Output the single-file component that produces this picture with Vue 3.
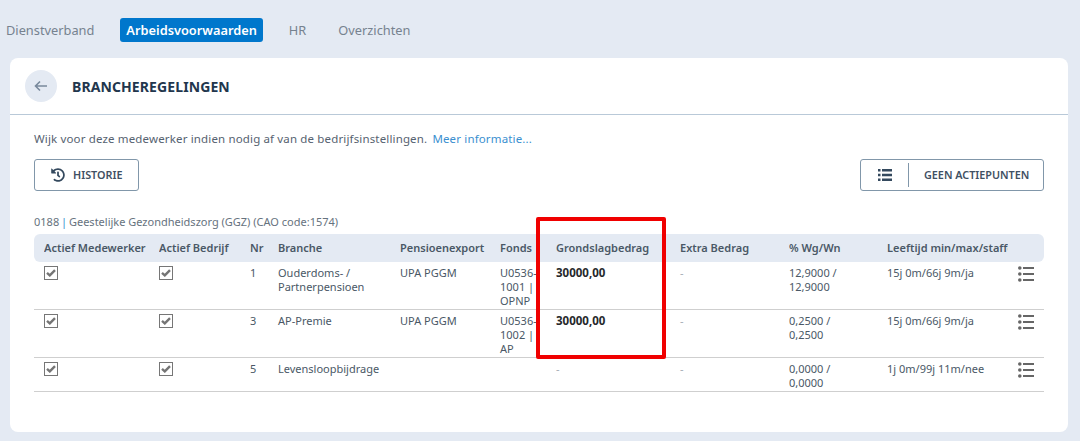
<template>
  <div class="page">
    <nav class="tabs">
      <a v-for="tab in tabs" :key="tab" class="tab" :class="{ active: tab === activeTab }">{{ tab }}</a>
    </nav>

    <section class="card">
      <header class="card-head">
        <button class="back" aria-label="Terug">
          <svg width="14" height="12" viewBox="0 0 14 12"><path d="M13 6H2M6 1.500 1.500 6 6 10.500" fill="none" stroke="#78899c" stroke-width="1.600" /></svg>
        </button>
        <h1>BRANCHEREGELINGEN</h1>
      </header>

      <div class="card-body">
        <p class="intro">
          Wijk voor deze medewerker indien nodig af van de bedrijfsinstellingen.
          <a class="more">Meer informatie...</a>
        </p>

        <div class="actions">
          <button class="btn history">
            <svg width="14" height="14" viewBox="0 0 512 512"><path fill="#34495e" d="M504 255.531c.253 136.64-111.18 248.372-247.82 248.468-59.015.042-113.223-20.53-155.822-54.911-11.077-8.94-11.905-25.541-1.839-35.607l11.267-11.267c8.609-8.609 22.353-9.551 31.891-1.984C173.062 425.135 212.781 440 256 440c101.705 0 184-82.311 184-184 0-101.705-82.311-184-184-184-48.814 0-93.149 18.969-126.068 49.932l50.754 50.754c10.08 10.08 2.941 27.314-11.313 27.314H24c-8.837 0-16-7.163-16-16V38.627c0-14.254 17.234-21.393 27.314-11.314l49.372 49.372C129.209 34.136 189.552 8 256 8c136.81 0 247.747 110.78 248 247.531zm-180.912 78.784l9.823-12.63c8.138-10.463 6.253-25.542-4.21-33.679L288 256.349V152c0-13.255-10.745-24-24-24h-16c-13.255 0-24 10.745-24 24v135.651l65.409 50.874c10.463 8.137 25.541 6.253 33.679-4.21z" /></svg>
            <span>HISTORIE</span>
          </button>
          <button class="btn points">
            <span class="points-icon">
              <svg width="14" height="12" viewBox="0 0 14 12"><path fill="#34495e" d="M0 0h2.500v2.500H0zM4 0h10v2.500H4zM0 4.700h2.500v2.500H0zM4 4.700h10v2.500H4zM0 9.400h2.500v2.500H0zM4 9.400h10v2.500H4z" /></svg>
            </span>
            <span>GEEN ACTIEPUNTEN</span>
          </button>
        </div>

        <p class="caption">0188 <span class="sep">|</span> Geestelijke Gezondheidszorg (GGZ) (CAO code:1574)</p>

        <div class="table-wrap">
          <table>
            <colgroup>
              <col v-for="w in colWidths" :key="w.id" :style="{ width: w.px + 'px' }" />
            </colgroup>
            <thead>
              <tr>
                <th v-for="c in columns" :key="c"><div class="clip">{{ c }}</div></th>
                <th></th>
              </tr>
            </thead>
            <tbody>
              <tr v-for="row in rows" :key="row.nr">
                <td><span class="check"><svg width="10" height="8" viewBox="0 0 10 8"><path d="M1 3.800l2.800 2.600L9 1.200" fill="none" stroke="#757575" stroke-width="2.400" /></svg></span></td>
                <td><span class="check"><svg width="10" height="8" viewBox="0 0 10 8"><path d="M1 3.800l2.800 2.600L9 1.200" fill="none" stroke="#757575" stroke-width="2.400" /></svg></span></td>
                <td>{{ row.nr }}</td>
                <td>{{ row.branche }}</td>
                <td>{{ row.export }}</td>
                <td>{{ row.fonds }}</td>
                <td :class="{ amount: row.bedrag !== '-', dash: row.bedrag === '-' }">{{ row.bedrag }}</td>
                <td class="dash">-</td>
                <td class="pct">{{ row.pct }}</td>
                <td>{{ row.leeftijd }}</td>
                <td class="menu">
                  <svg width="16" height="16" viewBox="0 0 16 16">
                    <g fill="#666">
                      <circle cx="1.800" cy="2" r="1.800" /><circle cx="1.800" cy="8" r="1.800" /><circle cx="1.800" cy="14" r="1.800" />
                      <rect x="5" y="1" width="11" height="2" /><rect x="5" y="7" width="11" height="2" /><rect x="5" y="13" width="11" height="2" />
                    </g>
                  </svg>
                </td>
              </tr>
            </tbody>
          </table>
          <div class="highlight"></div>
        </div>
      </div>
    </section>
  </div>
</template>

<script setup>
const tabs = ["Dienstverband", "Arbeidsvoorwaarden", "HR", "Overzichten"];
const activeTab = "Arbeidsvoorwaarden";

const columns = [
  "Actief Medewerker",
  "Actief Bedrijf",
  "Nr",
  "Branche",
  "Pensioenexport",
  "Fonds",
  "Grondslagbedrag",
  "Extra Bedrag",
  "% Wg/Wn",
  "Leeftijd min/max/staffel",
];

const colWidths = [115, 91, 28, 122, 100, 56, 124, 109, 98, 131, 36].map((px, id) => ({ id, px }));

const rows = [
  { nr: 1, branche: "Ouderdoms- / Partnerpensioen", export: "UPA PGGM", fonds: "U0536-1001 | OPNP", bedrag: "30000,00", pct: "12,9000 / 12,9000", leeftijd: "15j 0m/66j 9m/ja" },
  { nr: 3, branche: "AP-Premie", export: "UPA PGGM", fonds: "U0536-1002 | AP", bedrag: "30000,00", pct: "0,2500 / 0,2500", leeftijd: "15j 0m/66j 9m/ja" },
  { nr: 5, branche: "Levensloopbijdrage", export: "", fonds: "", bedrag: "-", pct: "0,0000 / 0,0000", leeftijd: "1j 0m/99j 11m/nee" },
];
</script>

<style>
html,
body {
  margin: 0;
  background: #e4eaf3;
}
</style>

<style scoped>
.page {
  height: 441px;
  box-sizing: border-box;
  padding: 18px 12px 9px 10px;
  overflow: hidden;
  font-family: "Noto Sans", "Open Sans", sans-serif;
  font-size: 11px;
  line-height: 14px;
  color: #4a5866;
}

.tabs {
  display: flex;
  align-items: center;
  height: 24px;
  margin: 0 0 16px -10px;
  gap: 20px;
}

.tab {
  padding: 0 6px;
  height: 24px;
  line-height: 24px;
  font-size: 12.800px;
  color: #76828f;
  border-radius: 3px;
}

.tab.active {
  background: #0077cc;
  color: #fff;
  font-weight: 600;
}

.card {
  height: 374px;
  background: #fff;
  border-radius: 8px;
}

.card-head {
  display: flex;
  align-items: center;
  height: 57px;
  box-sizing: border-box;
  padding-left: 15px;
  border-bottom: 1px solid #b9c9d8;
}

.back {
  display: flex;
  align-items: center;
  justify-content: center;
  width: 32px;
  height: 32px;
  padding: 0;
  border: 0;
  border-radius: 50%;
  background: #e4eaf3;
}

h1 {
  margin: 1px 0 0 15px;
  font-size: 14px;
  font-weight: 700;
  letter-spacing: 0.100px;
  color: #22364d;
}

.card-body {
  padding: 17px 24px 0;
}

.intro {
  margin: 0;
  height: 14px;
  font-size: 11.500px;
  letter-spacing: 0.150px;
  color: #566270;
}

.more {
  margin-left: 2px;
  color: #3a8fd0;
}

.actions {
  display: flex;
  justify-content: space-between;
  margin-top: 13px;
}

.btn {
  display: flex;
  align-items: center;
  height: 32px;
  box-sizing: border-box;
  background: #fff;
  border: 1px solid #8197aa;
  border-radius: 3px;
  font: inherit;
  font-size: 10.800px;
  font-weight: 600;
  color: #3f5063;
}

.history {
  width: 105px;
  padding: 0 0 0 16px;
  gap: 8px;
}

.points {
  width: 184px;
  padding: 0;
}

.points-icon {
  display: flex;
  align-items: center;
  justify-content: center;
  width: 47px;
  height: 24px;
  margin-right: 15px;
  border-right: 1px solid #8197aa;
}

.caption {
  margin: 24px 0 5px;
  height: 14px;
  color: #66727e;
}

.sep {
  margin: 0 -1px;
  color: #3a8fd0;
}

.table-wrap {
  position: relative;
}

table {
  width: 1010px;
  table-layout: fixed;
  border-collapse: separate;
  border-spacing: 0;
}

th {
  height: 28px;
  padding: 0 0 0 10px;
  background: #e4eaf3;
  text-align: left;
  font-weight: 600;
  color: #4a5866;
}

th:first-child {
  border-radius: 6px 0 0 6px;
}

th:last-child {
  border-radius: 0 6px 6px 0;
}

.clip {
  white-space: nowrap;
  overflow: hidden;
}

td {
  padding: 4px 0 1px 10px;
  vertical-align: top;
  border-bottom: 1px solid #cfcfcf;
}

.pct {
  padding-right: 10px;
}

.check {
  display: flex;
  align-items: center;
  justify-content: center;
  width: 12px;
  height: 12px;
  background: #fff;
  border: 1px solid #767676;
}

.amount {
  font-size: 11.500px;
  font-weight: 700;
  color: #26282b;
}

.dash {
  color: #a5adb5;
}

.menu svg {
  display: block;
}

.highlight {
  position: absolute;
  left: 502px;
  top: -17px;
  width: 122px;
  height: 134px;
  border: 4px solid #f00000;
  border-radius: 2px;
}
</style>
